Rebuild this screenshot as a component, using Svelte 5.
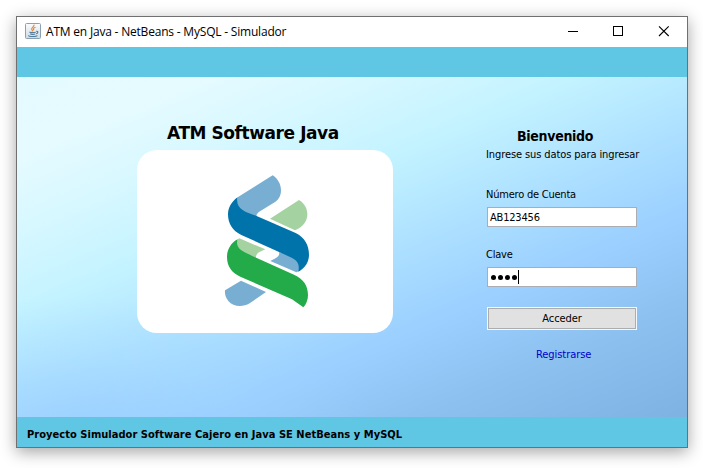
<script>
  let account = $state('AB123456');
  const pinDots = [0, 1, 2, 3];
</script>

<div class="desktop">
  <section class="window">
    <header class="titlebar">
      <svg class="java" width="16" height="16" viewBox="0 0 16 16">
        <defs>
          <linearGradient id="tile" x1="0" y1="0" x2="0" y2="1">
            <stop offset="0" stop-color="#fbfdfe" />
            <stop offset="1" stop-color="#cddbe4" />
          </linearGradient>
        </defs>
        <rect x=".5" y=".5" width="15" height="15" rx="1" fill="url(#tile)" stroke="#8ba1b2" />
        <path d="M9 1.7C9.7 4 5.5 4.500 6.800 6.700L8 8.300M10.500 4.200C7.500 5.300 8.200 6 9 7.300" fill="none" stroke="#e58438" stroke-width="1.1" />
        <path d="M4.7 8.800c-.8 1 5.800.900 6 .1M5.200 10.800c1 .800 4 .800 5 .1M3.700 12.400c-1 1.500 8 1.500 8.600.1M11.300 8.400c2.500-.5 1.600 2-.2 2.400" fill="none" stroke="#557b9b" stroke-width="1.1" />
      </svg>
      <span class="title">ATM en Java - NetBeans - MySQL - Simulador</span>
      <svg class="controls" width="135" height="30" viewBox="0 0 135 30">
        <path d="M16 14.5h10" stroke="#000" />
        <rect x="61.5" y="9.5" width="9" height="9" fill="none" stroke="#000" />
        <path d="M107 9.3l9.7 9.7M116.7 9.3l-9.7 9.7" stroke="#000" stroke-width="1.1" />
      </svg>
    </header>
    <div class="band"></div>
    <main>
      <div class="brand">
        <h1>ATM Software Java</h1>
        <div class="card">
          <svg width="120" height="160" viewBox="0 0 360 480">
            <path d="M83 112L188 46C203 56 213 72 213 91C213 110 204 122 189 130L150 154C142 159 138 164 140 172L104 158C82 149 78 129 83 112Z" fill="#79aed3" />
            <path d="M180 176L267 120C283 130 292 145 292 163C292 184 278 202 255 211Z" fill="#a5d2a1" />
            <path d="M207 276L244 287C268 297 275 318 268 333L259 337L181 303L198 294C207 288 209 283 207 276Z" fill="#79aed3" />
            <path d="M83 112C79 128 84 141 99 151C110 158 124 163 138 167L257 219C284 232 297 256 297 284C297 305 286 324 265 335C269 314 264 302 245 293L94 225C69 214 54 192 54 163C54 143 65 124 83 112Z" fill="#0073aa" />
            <path d="M88 235L166 268L147 277C138 283 137 290 138 298L108 288C83 277 76 255 83 238Z" fill="#a5d2a1" />
            <path d="M83 238C78 251 83 262 94 271C103 278 116 282 127 288L252 344C281 357 294 377 294 406C294 421 288 434 280 442L246 418L91 350C65 338 51 319 51 291C51 269 63 248 83 238Z" fill="#23aa49" />
            <path d="M45 391L93 362L168 396L119 430C97 443 69 440 55 423C47 413 44 402 45 391Z" fill="#79aed3" />
          </svg>
        </div>
      </div>
      <form class="login" onsubmit={(e) => e.preventDefault()}>
        <h2>Bienvenido</h2>
        <p>Ingrese sus datos para ingresar</p>
        <label for="account">Número de Cuenta</label>
        <input id="account" class="field" bind:value={account} />
        <label for="pin">Clave</label>
        <div id="pin" class="field pin">
          {#each pinDots as dot (dot)}<i></i>{/each}
          <b></b>
        </div>
        <button>Acceder</button>
        <span class="register">Registrarse</span>
      </form>
    </main>
    <footer><span>Proyecto Simulador Software Cajero en Java SE NetBeans y MySQL</span></footer>
  </section>
</div>

<style>
  :global(body) { margin: 0; background: #fff; overflow: hidden; }
  * { box-sizing: border-box; }
  .desktop { width: 703px; height: 468px; padding: 16px; overflow: hidden; font-family: "DejaVu Sans Condensed", "DejaVu Sans", sans-serif; color: #000; }
  .window { width: 672px; height: 432px; border: 1px solid #707070; box-shadow: 0 4px 15px rgba(0, 0, 0, .36); display: flex; flex-direction: column; white-space: nowrap; }
  .titlebar { height: 30px; background: #fff; display: flex; align-items: center; padding-left: 8px; }
  .java { flex: none; margin-bottom: 2px; }
  .title { font: 12px/30px "Open Sans", sans-serif; margin-left: 5px; letter-spacing: -.2px; }
  .controls { margin-left: auto; }
  .band { height: 30px; background: #5fc6e3; }
  main { height: 340px; display: flex; background: radial-gradient(ellipse 300px 130px at 60px 350px, rgba(154, 207, 255, .75), rgba(160, 213, 255, .3) 55%, rgba(175, 226, 255, 0)), linear-gradient(157deg, #e3faff 0%, #e6fbff 12%, #d8f8ff 24%, #c3f3ff 38%, #afe2ff 52%, #9acfff 68%, #8dc1f0 81%, #7eb2e2 100%); }
  .brand { width: 256px; margin-left: 120px; padding-top: 42px; }
  h1 { margin: 0; height: 31px; padding-left: 30px; font-family: "DejaVu Sans", sans-serif; font-size: 17px; line-height: 28px; font-weight: bold; letter-spacing: -.43px; }
  .card { height: 183px; border-radius: 20px; background: #fff; padding: 10px 0 0 73px; }
  .card svg { display: block; }
  .login { width: 152px; margin-left: 93px; padding-top: 49px; display: flex; flex-direction: column; font-size: 11px; }
  h2 { margin: 0; padding-left: 31px; font-size: 14px; line-height: 20px; letter-spacing: -.3px; }
  p { margin: 2px 0 0; line-height: 14px; letter-spacing: -.1px; }
  label { display: block; line-height: 14px; margin-top: 26px; letter-spacing: -.22px; }
  .field { width: 150px; height: 20px; margin: 5px 0 0 1px; padding: 0 2px; border: 1px solid #abadb3; background: #fff; font: inherit; font-size: 11px; line-height: 18px; letter-spacing: -.2px; color: #000; border-radius: 0; outline: 0; }
  .field + label { margin-top: 21px; }
  .pin { display: flex; align-items: center; padding-left: 3px; gap: 2px; }
  .pin i { width: 5px; height: 5px; border-radius: 50%; background: #000; margin-top: 1px; }
  .pin b { width: 1px; height: 14px; background: #000; margin-left: -1px; }
  button { width: 150px; height: 23px; margin: 20px 0 0 1px; padding: 0; border: 1px solid #f5f8fb; box-shadow: inset 0 0 0 1px #adadad; background: #e1e1e1; color: #000; font: inherit; letter-spacing: -.1px; line-height: 19px; border-radius: 0; }
  .register { margin: 17px 0 0 50px; line-height: 16px; letter-spacing: -.06px; color: #00c; }
  footer { height: 30px; background: #5fc6e3; padding-left: 10px; font-size: 11px; line-height: 35px; font-weight: bold; letter-spacing: .04px; }
</style>
